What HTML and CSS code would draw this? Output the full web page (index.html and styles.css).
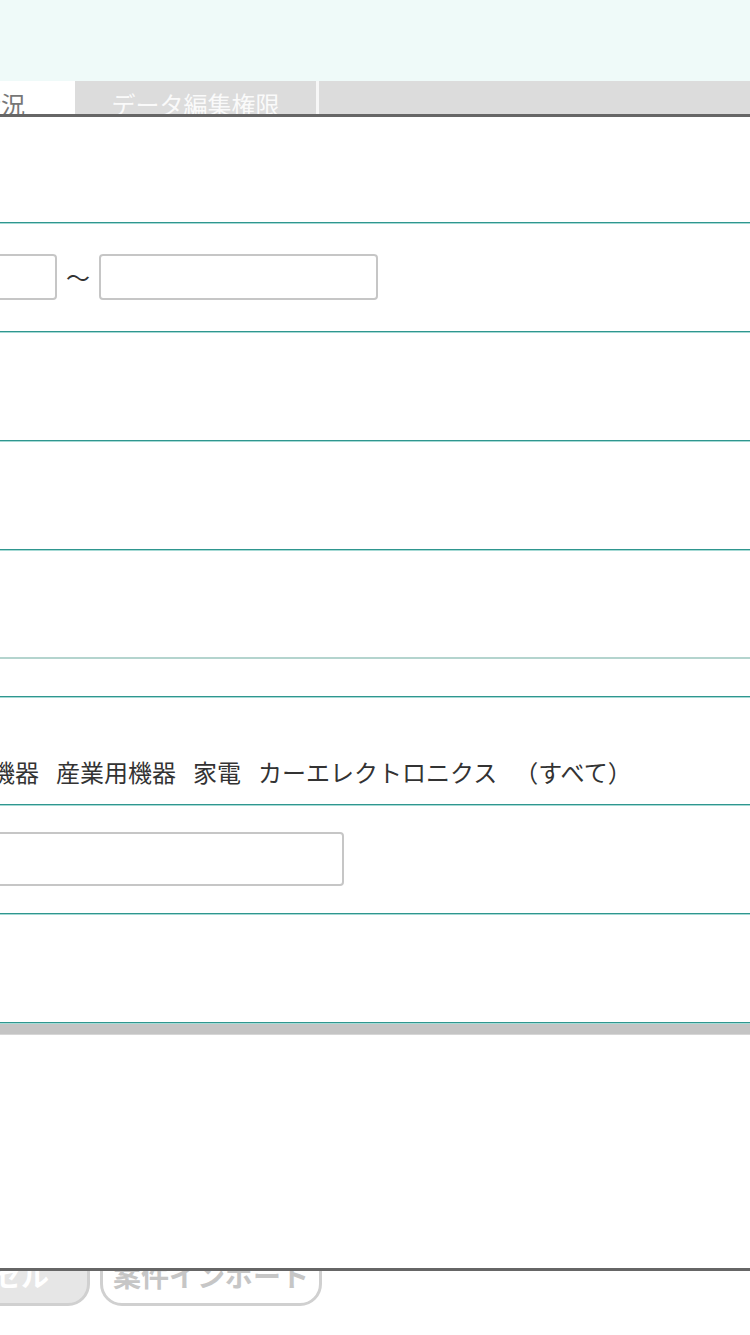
FILE: index.html
```html
<!DOCTYPE html>
<html lang="ja">
<head>
    <meta charset="UTF-8">
    <meta name="viewport" content="width=device-width, initial-scale=1.0">
    <title>案件検索</title>
    <link rel="stylesheet" href="styles.css">
</head>
<body>
    <!-- 上部の帯 -->
    <div class="top-band"></div>

    <!-- タブ -->
    <div class="tabs">
        <div class="tab tab-active">進捗状況</div>
        <div class="tab">データ編集権限</div>
    </div>

    <!-- 検索条件 -->
    <div class="panel">
        <div class="row row-first"></div>
        <div class="row">
            <div class="range">
                <input type="text" class="field field-from">
                <span class="tilde">～</span>
                <input type="text" class="field field-to">
            </div>
        </div>
        <div class="row"></div>
        <div class="row"></div>
        <div class="row row-light"></div>
        <div class="row row-small"></div>
        <div class="row row-top">
            <div class="check-list">
                <span>通信機器</span>
                <span>産業用機器</span>
                <span>家電</span>
                <span>カーエレクトロニクス</span>
                <span>（すべて）</span>
            </div>
        </div>
        <div class="row">
            <input type="text" class="field field-wide">
        </div>
        <div class="row"></div>
        <div class="gray-band"></div>
    </div>

    <!-- ボタン -->
    <div class="footer">
        <button class="btn btn-cancel">キャンセル</button>
        <button class="btn btn-import">案件インポート</button>
    </div>
</body>
</html>
```

FILE: styles.css
```css
body {
    margin: 0;
    width: 750px;
    height: 1335px;
    overflow: hidden;
    background-color: #ffffff;
    font-family: "Noto Sans CJK JP", "Noto Sans", sans-serif;
    color: #333333;
}
.top-band {
    height: 81px;
    background-color: #effaf9;
}
.tabs {
    display: flex;
    height: 33px;
    background-color: #dcdcdc;
    border-bottom: 3px solid #666666;
    overflow: hidden;
}
.tab {
    flex-shrink: 0;
    width: 241px;
    padding-top: 11px;
    font-size: 24px;
    line-height: 24px;
    text-align: center;
    color: #fafafa;
    border-right: 3px solid #f7f7f7;
}
.tab-active {
    width: 196px;
    margin-left: -121px;
    background-color: #ffffff;
    color: #777777;
    border-right: none;
}
.panel {
    height: 1151px;
    border-bottom: 3px solid #666666;
}
.row {
    box-sizing: border-box;
    height: 108.9px;
    display: flex;
    align-items: center;
    border-bottom: 1px solid #2f968f;
    box-shadow: 0 1px 0 #a6dad5;
}
.row-first {
    height: 106px;
}
.row-light {
    border-bottom: 2px solid #b4d4ce;
    box-shadow: none;
}
.row-small {
    height: 38px;
}
.row-top {
    align-items: flex-start;
    padding-top: 63px;
}
.range {
    display: flex;
    align-items: center;
    gap: 9px;
    margin-left: -222px;
}
.field {
    box-sizing: border-box;
    height: 46px;
    border: 2px solid #c6c6c6;
    border-radius: 4px;
    background-color: #ffffff;
    padding: 0 10px;
}
.field-from, .field-to {
    width: 279px;
}
.field-wide {
    width: 400px;
    height: 54px;
    margin-left: -56px;
}
.tilde {
    font-size: 24px;
    line-height: 24px;
    color: #333333;
}
.check-list {
    display: flex;
    gap: 17px;
    margin-left: -57px;
    font-size: 24px;
    line-height: 24px;
    white-space: nowrap;
}
.gray-band {
    height: 10px;
    margin-top: 1px;
    background-color: #c4c4c4;
    border-bottom: 1px solid #d6d6d6;
}
.footer {
    display: flex;
    gap: 10px;
    height: 64px;
    overflow: hidden;
}
.btn {
    flex-shrink: 0;
    box-sizing: border-box;
    width: 222px;
    height: 63px;
    margin-top: -28px;
    border: 3px solid #d0d0d0;
    border-radius: 22px;
    font-family: "Noto Sans CJK JP", sans-serif;
    font-size: 28px;
    font-weight: bold;
    line-height: 28px;
    padding: 0;
}
.btn-cancel {
    margin-left: -132px;
    background-color: #e6e6e6;
    color: #ffffff;
}
.btn-import {
    background-color: #ffffff;
    color: #c6c6c6;
}
```
